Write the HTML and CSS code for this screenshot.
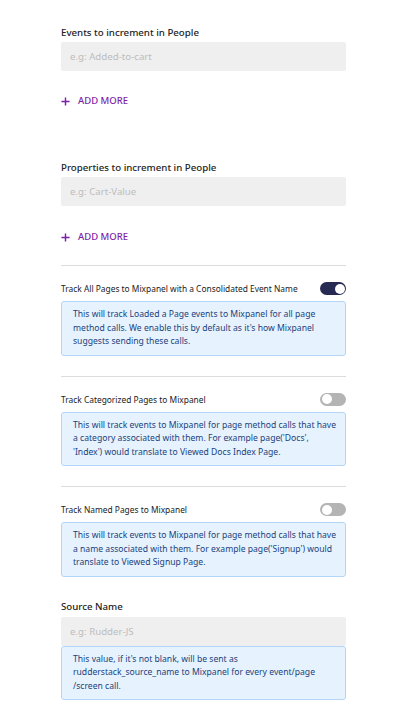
FILE: index.html
```html
<!DOCTYPE html>
<html>
<head>
<meta charset="utf-8">
<link rel="stylesheet" href="styles.css">
</head>
<body>
<div class="form">
  <section class="field field-first">
    <label class="label">Events to increment in People</label>
    <div class="input"><span class="placeholder">e.g: Added-to-cart</span></div>
    <button class="add-more"><svg class="plus" viewBox="0 0 10 10" width="9" height="9"><path d="M5 0.5v9M0.5 5h9" stroke="currentColor" stroke-width="1.6"/></svg><span>ADD MORE</span></button>
  </section>

  <section class="field field-second">
    <label class="label">Properties to increment in People</label>
    <div class="input"><span class="placeholder">e.g: Cart-Value</span></div>
    <button class="add-more"><svg class="plus" viewBox="0 0 10 10" width="9" height="9"><path d="M5 0.5v9M0.5 5h9" stroke="currentColor" stroke-width="1.6"/></svg><span>ADD MORE</span></button>
  </section>

  <section class="toggle-block">
    <div class="toggle-row">
      <span class="toggle-label">Track All Pages to Mixpanel with a Consolidated Event Name</span>
      <span class="switch on"><span class="knob"></span></span>
    </div>
    <div class="info">This will track Loaded a Page events to Mixpanel for all page method calls. We enable this by default as it's how Mixpanel suggests sending these calls.</div>
  </section>

  <section class="toggle-block">
    <div class="toggle-row">
      <span class="toggle-label">Track Categorized Pages to Mixpanel</span>
      <span class="switch"><span class="knob"></span></span>
    </div>
    <div class="info">This will track events to Mixpanel for page method calls that have a category associated with them. For example page('Docs', 'Index') would translate to Viewed Docs Index Page.</div>
  </section>

  <section class="toggle-block">
    <div class="toggle-row">
      <span class="toggle-label">Track Named Pages to Mixpanel</span>
      <span class="switch"><span class="knob"></span></span>
    </div>
    <div class="info">This will track events to Mixpanel for page method calls that have a name associated with them. For example page('Signup') would translate to Viewed Signup Page.</div>
  </section>

  <section class="field field-source">
    <label class="label">Source Name</label>
    <div class="input"><span class="placeholder">e.g: Rudder-JS</span></div>
    <div class="info info-attached">This value, if it's not blank, will be sent as rudderstack_source_name to Mixpanel for every event/page /screen call.</div>
  </section>
</div>
</body>
</html>
```

FILE: styles.css
```css
* { box-sizing: border-box; }
html, body { margin: 0; padding: 0; background: #fff; }
body {
  font-family: "Noto Sans", "Open Sans", sans-serif;
  color: #222;
}
.form {
  width: 285px;
  margin-left: 61px;
  padding-top: 26px;
  display: flex;
  flex-direction: column;
}
.field { display: flex; flex-direction: column; }
.label {
  font-size: 9.7px;
  font-weight: 500;
  line-height: 14px;
  color: #222;
  margin-bottom: 2px;
}
.input {
  height: 29px;
  background: #efefef;
  border-radius: 2px;
  display: flex;
  align-items: center;
  padding-left: 9px;
}
.placeholder {
  font-size: 9.7px;
  color: #bdbdbd;
}
.add-more {
  margin-top: 24px;
  border: 0;
  background: none;
  padding: 0;
  display: flex;
  align-items: center;
  gap: 8px;
  color: #7e1fa8;
  font-family: inherit;
  font-size: 9.5px;
  font-weight: 500;
  line-height: 12px;
  cursor: pointer;
  align-self: flex-start;
}
.plus { display: block; }
.field-second { margin-top: 54px; }
.field-second .add-more { margin-top: 25px; }
.toggle-block {
  border-top: 1px solid #dcdcdc;
  margin-top: 22px;
  padding-top: 16px;
  display: flex;
  flex-direction: column;
  gap: 6px;
}
.toggle-block + .toggle-block { margin-top: 20px; }
.toggle-row {
  display: flex;
  align-items: center;
  justify-content: space-between;
  height: 13px;
}
.toggle-label {
  font-size: 8.4px;
  color: #222;
}
.switch {
  position: relative;
  width: 26px;
  height: 13px;
  border-radius: 7px;
  background: #b4b4b4;
  display: block;
}
.switch.on { background: #272a52; }
.knob {
  position: absolute;
  top: 1.5px;
  left: 1.5px;
  width: 10px;
  height: 10px;
  border-radius: 50%;
  background: #fff;
}
.switch.on .knob { left: auto; right: 1.5px; }
.info {
  background: #e6f3fe;
  border: 1px solid #b3d5f7;
  border-radius: 3px;
  padding: 6px 5px 6px 11px;
  font-size: 8.6px;
  line-height: 13.5px;
  color: #1b3f7c;
}
.field-source { margin-top: 23px; }
.field-source .label { margin-bottom: 3px; }
```
